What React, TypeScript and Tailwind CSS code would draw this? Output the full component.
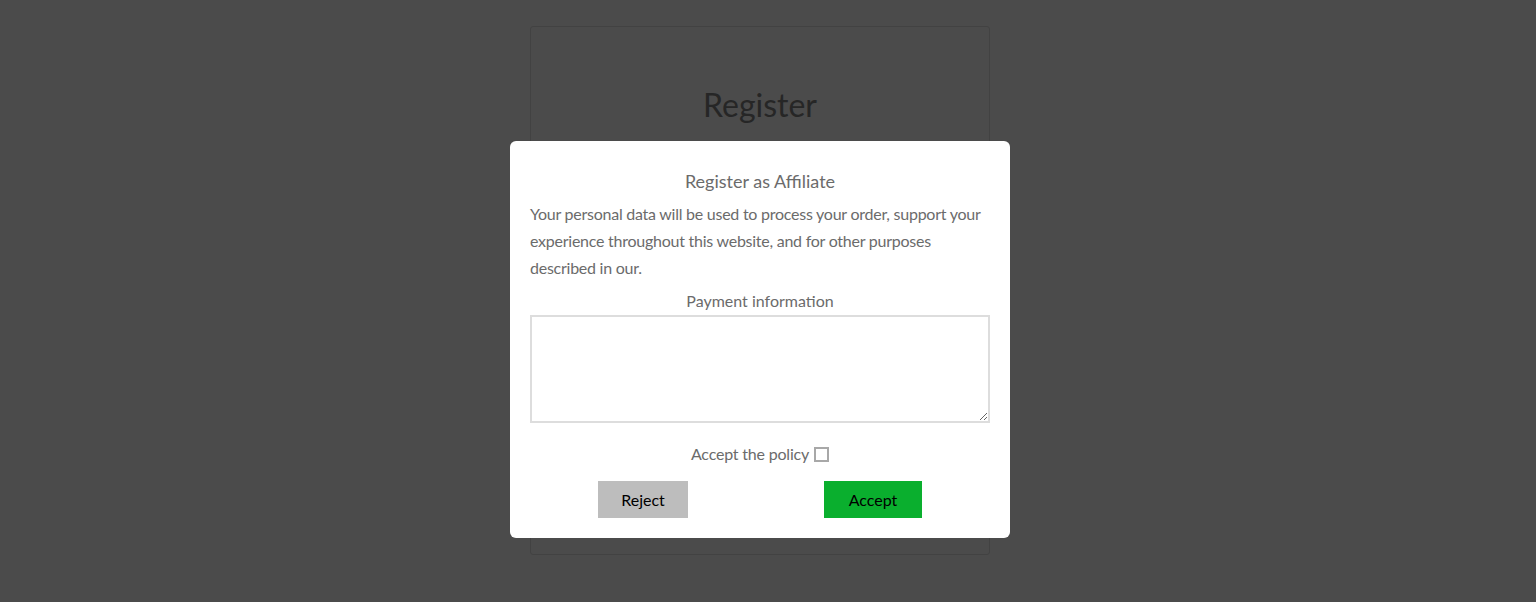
import React, { useState } from 'react';

export default function App() {
  const [accepted, setAccepted] = useState(false);

  return (
    <div className="relative h-[602px] w-full overflow-hidden bg-[#4b4b4b] pr-4 font-['Lato',sans-serif]">
      {/* Page behind the overlay */}
      <div className="flex justify-center pt-[26px]">
        <div className="h-[529px] w-[460px] rounded-[3px] border border-[#424242] pt-[60px] text-center">
          <h1 className="text-[32px] leading-[36px] text-[#262626]">Register</h1>
        </div>
      </div>

      {/* Modal */}
      <div className="absolute inset-y-0 left-0 right-4 flex items-start justify-center pt-[141px]">
        <div className="w-[500px] rounded-[6px] bg-white px-5 pb-[20px] pt-[27px] text-[#6b6b6b]">
          <h2 className="text-center text-[18px] leading-[26px]">Register as Affiliate</h2>
          <p className="mt-[6px] text-[16px] leading-[27px] tracking-[-0.25px]">
            Your personal data will be used to process your order, support your experience throughout this website, and
            for other purposes described in our.
          </p>
          <label className="mb-[2px] mt-[8px] block text-center text-[16px] leading-[24px]">Payment information</label>
          <textarea className="block h-[108px] w-full resize border-2 border-[#dddddd] bg-white outline-none" />
          <div className="mt-[19px] flex items-center justify-center gap-[5px] text-[16px] leading-[24px] tracking-[-0.2px]">
            <span>Accept the policy</span>
            <button
              onClick={() => setAccepted(!accepted)}
              className="h-[15px] w-[15px] border-2 border-[#a8a8a8] bg-white"
            >
              {accepted && <span className="block h-full w-full bg-[#0aaf2e]" />}
            </button>
          </div>
          <div className="mt-[15px] flex justify-around">
            <button className="h-[37px] w-[90px] bg-[#bdbdbd] text-[16px] text-black">Reject</button>
            <button className="h-[37px] w-[98px] bg-[#0aaf2e] text-[16px] text-black">Accept</button>
          </div>
        </div>
      </div>
    </div>
  );
}
